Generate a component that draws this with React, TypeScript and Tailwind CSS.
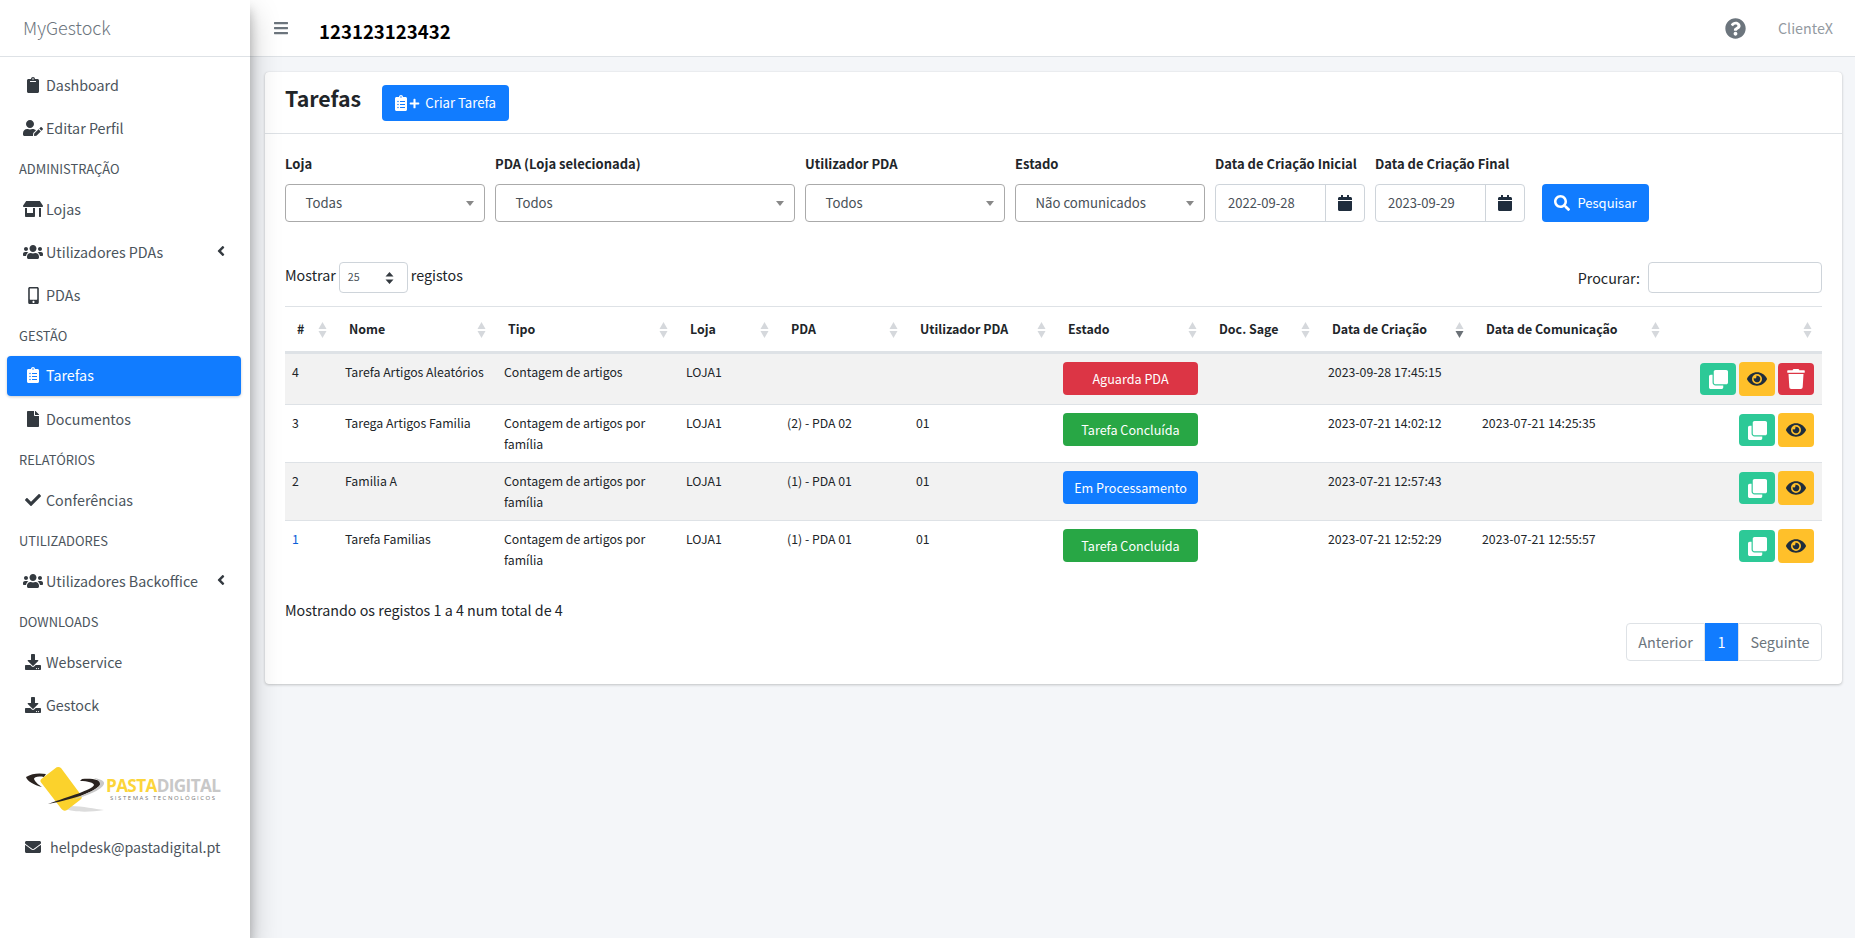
import React from "react";
import {
  FaClipboard, FaUserEdit, FaStoreAlt, FaUsers, FaMobileAlt, FaClipboardList, FaFile, FaCheck,
  FaDownload, FaEnvelope, FaBars, FaQuestionCircle, FaAngleLeft, FaCalendar, FaSearch, FaClone,
  FaEye, FaTrash, FaPlus,
} from "react-icons/fa";

function NavItem({ icon, label, active, chevron }: { icon: React.ReactNode; label: string; active?: boolean; chevron?: boolean }) {
  return (
    <div className={`relative mx-[7px] flex h-10 w-[234px] items-center rounded-[4px] pb-[2px] pl-4 ${active ? "-mt-px mb-[4px] bg-[#117cff] text-white shadow-[0_1px_3px_rgba(0,0,0,0.2)]" : "mb-[3px] text-[#4b545c]"}`}>
      <span className={`flex w-5 justify-center ${active ? "text-white" : "text-[#343a40]"}`}>{icon}</span>
      <span className="ml-[3px] text-[14.3px] leading-6">{label}</span>
      {chevron && <FaAngleLeft className="absolute right-[12px] top-[10px] text-[16px] text-[#343a40]" />}
    </div>
  );
}

function Section({ label }: { label: string }) {
  return <div className="flex h-[38px] items-center pb-[4px] pl-[19px] text-[12.9px] uppercase text-[#4b545c]">{label}</div>;
}

function Logo() {
  return (
    <div className="ml-[26px] mt-[37px] flex h-[46px] items-start">
      <svg width="78" height="46" viewBox="0 0 78 46" className="shrink-0">
        <path d="M34 41 C50 38 66 43 78 44 C60 47 44 46 34 41Z" fill="#dcdcdc" />
        <path d="M0 11 C6 7 14 7 20 8 L18 11 C12 10 8 11 8 13 C9 16 13 19 16 21 C8 19 1 15 0 11Z" fill="#2a2320" />
        <path d="M29 2.5 Q32 0 35 2 L55 29 Q57 32 54 34 L41 44 Q38 46 35.5 43 L15.5 17 Q13 14.5 16 12.5Z" fill="#fbd22c" />
        <path d="M56 13 C66 12 75 14 75 17 C74 24 50 33 22 38 C44 30 66 24 68 19 C68 17 62 15 54 15Z" fill="#2a2320" />
        <path d="M68 12 C74 13 79 15 78 18 C76 24 60 30 46 34 C60 28 74 22 74 18 C74 16 72 14 68 12Z" fill="#c9c9c9" />
      </svg>
      <div className="ml-[2px] mt-[11px] flex flex-col font-['Open_Sans',sans-serif]">
        <div className="text-[17.2px] font-bold leading-[18px] tracking-[-0.65px]">
          <span className="text-[#fcd53a]">PASTA</span><span className="text-[#c8c8c8]">DIGITAL</span>
        </div>
        <div className="ml-[4px] whitespace-nowrap text-[6px] leading-[7px] tracking-[1.55px] text-[#777]">SISTEMAS TECNOLÓGICOS</div>
      </div>
    </div>
  );
}

function Sidebar() {
  return (
    <aside className="relative z-20 flex w-[250px] shrink-0 flex-col bg-white shadow-[0_14px_28px_rgba(0,0,0,0.25),0_10px_10px_rgba(0,0,0,0.22)]">
      <div className="flex h-[57px] items-center border-b border-[#dee2e6] pb-[2px] pl-[23px] text-[18px] font-light text-[#6c757d]">MyGestock</div>
      <nav className="flex flex-col pt-[9px]">
        <NavItem icon={<FaClipboard className="text-[16px]" />} label="Dashboard" />
        <NavItem icon={<FaUserEdit className="text-[20px]" />} label="Editar Perfil" />
        <Section label="Administração" />
        <NavItem icon={<FaStoreAlt className="text-[20px]" />} label="Lojas" />
        <NavItem icon={<FaUsers className="text-[20px]" />} label="Utilizadores PDAs" chevron />
        <NavItem icon={<FaMobileAlt className="text-[17px]" />} label="PDAs" />
        <Section label="Gestão" />
        <NavItem icon={<FaClipboardList className="text-[16px]" />} label="Tarefas" active />
        <NavItem icon={<FaFile className="text-[16px]" />} label="Documentos" />
        <Section label="Relatórios" />
        <NavItem icon={<FaCheck className="text-[16px]" />} label="Conferências" />
        <Section label="Utilizadores" />
        <NavItem icon={<FaUsers className="text-[20px]" />} label="Utilizadores Backoffice" chevron />
        <Section label="Downloads" />
        <NavItem icon={<FaDownload className="text-[16px]" />} label="Webservice" />
        <NavItem icon={<FaDownload className="text-[16px]" />} label="Gestock" />
      </nav>
      <Logo />
      <div className="ml-[25px] mt-[23px] flex items-center text-[14.3px] leading-6 text-[#4b545c]">
        <FaEnvelope className="text-[16px] text-[#343a40]" />
        <span className="ml-[9px]">helpdesk@pastadigital.pt</span>
      </div>
    </aside>
  );
}

function Topbar() {
  return (
    <header className="flex h-[57px] items-center border-b border-[#dee2e6] bg-white pl-[23px] pr-[22px]">
      <FaBars className="text-[16px] text-[#6c757d]" />
      <span className="ml-[30px] mt-[5px] text-[18.6px] font-bold text-black">123123123432</span>
      <FaQuestionCircle className="ml-auto text-[21px] text-[#6c757d]" />
      <span className="ml-[32px] text-[14.3px] text-[#939aa1]">ClienteX</span>
    </header>
  );
}

function Select({ label, value, widthClass }: { label: string; value: string; widthClass: string }) {
  return (
    <div className={`flex flex-col ${widthClass}`}>
      <label className="-mt-px mb-[10px] h-[21px] text-[13px] font-bold leading-[21px] text-[#212529]">{label}</label>
      <div className="relative flex h-[38px] items-center rounded-[4px] border border-[#aaaaaa] bg-white pl-[19.5px] text-[13.2px] text-[#495057]">
        {value}
        <span className="absolute right-[10px] top-[16px] h-0 w-0 border-x-[4px] border-t-[5px] border-x-transparent border-t-[#888]" />
      </div>
    </div>
  );
}

function DateField({ label, value }: { label: string; value: string }) {
  return (
    <div className="flex w-[150px] flex-col">
      <label className="-mt-px mb-[10px] h-[21px] whitespace-nowrap text-[13px] font-bold leading-[21px] text-[#212529]">{label}</label>
      <div className="flex h-[38px] rounded-[4px] border border-[#ced4da] bg-white text-[13px] text-[#495057]">
        <span className="flex flex-1 items-center pl-3">{value}</span>
        <span className="flex w-[39px] items-center justify-center border-l border-[#ced4da] text-[#1f2d3d]"><FaCalendar className="text-[16px]" /></span>
      </div>
    </div>
  );
}

function SortIcons({ active }: { active?: boolean }) {
  return (
    <svg width="9" height="16" viewBox="0 0 9 16" className="absolute right-[10px] top-[15px]">
      <path d="M4.5 0 L8.5 7 H0.5Z" fill="#d5d8dc" />
      <path d="M4.5 16 L8.5 9 H0.5Z" fill={active ? "#6b7177" : "#d5d8dc"} />
    </svg>
  );
}

const heads = [
  { t: "#", w: "w-[52px]" },
  { t: "Nome", w: "w-[159px]" },
  { t: "Tipo", w: "w-[182px]" },
  { t: "Loja", w: "w-[101px]" },
  { t: "PDA", w: "w-[129px]" },
  { t: "Utilizador PDA", w: "w-[148px]" },
  { t: "Estado", w: "w-[151px]" },
  { t: "Doc. Sage", w: "w-[113px]" },
  { t: "Data de Criação", w: "w-[154px]", active: true },
  { t: "Data de Comunicação", w: "w-[196px]" },
  { t: "", w: "w-[152px]" },
];

const rows = [
  { id: "4", nome: "Tarefa Artigos Aleatórios", tipo: "Contagem de artigos", pda: "", user: "", estado: "Aguarda PDA", cor: "bg-[#dc3545]", criada: "2023-09-28 17:45:15", com: "", del: true, idCor: "" },
  { id: "3", nome: "Tarega Artigos Familia", tipo: "Contagem de artigos por família", pda: "(2) - PDA 02", user: "01", estado: "Tarefa Concluída", cor: "bg-[#28a745]", criada: "2023-07-21 14:02:12", com: "2023-07-21 14:25:35", del: false, idCor: "" },
  { id: "2", nome: "Familia A", tipo: "Contagem de artigos por família", pda: "(1) - PDA 01", user: "01", estado: "Em Processamento", cor: "bg-[#117cff]", criada: "2023-07-21 12:57:43", com: "", del: false, idCor: "" },
  { id: "1", nome: "Tarefa Familias", tipo: "Contagem de artigos por família", pda: "(1) - PDA 01", user: "01", estado: "Tarefa Concluída", cor: "bg-[#28a745]", criada: "2023-07-21 12:52:29", com: "2023-07-21 12:55:57", del: false, idCor: "text-[#0b5ed7]" },
];

function Table() {
  return (
    <table className="w-[1537px] table-fixed border-collapse text-[12.3px] leading-[21px] text-[#212529]">
      <colgroup>
        {heads.map((h, i) => <col key={i} className={h.w} />)}
      </colgroup>
      <thead>
        <tr className="h-[46px] border-y border-[#dee2e6] border-b-[3px]">
          {heads.map((h, i) => (
            <th key={i} className="relative pl-3 text-left align-middle text-[12.4px] font-bold">
              {h.t}
              <SortIcons active={h.active} />
            </th>
          ))}
        </tr>
      </thead>
      <tbody>
        {rows.map((r, i) => (
          <tr key={r.id} className={`border-b border-[#dee2e6] last:border-b-0 ${i === 0 ? "h-[52px]" : "h-[58px]"} ${i % 2 === 0 ? "bg-[#f2f2f2]" : "bg-white"}`}>
            <td className={`pl-[7px] pt-2 align-top ${r.idCor}`}>{r.id}</td>
            <td className="px-2 pt-2 align-top">{r.nome}</td>
            <td className="px-2 pt-2 align-top">{r.tipo}</td>
            <td className="px-2 pt-2 align-top">LOJA1</td>
            <td className="px-2 pt-2 align-top">{r.pda}</td>
            <td className="px-2 pt-2 align-top">{r.user}</td>
            <td className="pl-[7px] pt-2 align-top">
              <div className={`flex h-[33px] w-[135px] items-center justify-center rounded-[4px] text-[12.6px] text-white ${r.cor}`}>{r.estado}</div>
            </td>
            <td className="px-2 pt-2 align-top"></td>
            <td className="whitespace-nowrap px-2 pt-2 align-top">{r.criada}</td>
            <td className="whitespace-nowrap px-2 pt-2 align-top">{r.com}</td>
            <td className="pr-2 pt-2 align-top">
              <div className="flex items-center justify-end gap-[3px]">
                <span className="flex h-[32px] w-[36px] items-center justify-center rounded-[4px] bg-[#2dc997] text-[19px] text-white"><FaClone /></span>
                <span className="flex h-[34px] w-[36px] items-center justify-center rounded-[4px] bg-[#ffc02a] text-[20px] text-[#1f2d3d]"><FaEye /></span>
                {r.del && <span className="flex h-[32px] w-[36px] items-center justify-center rounded-[4px] bg-[#dc3545] text-[20px] text-white"><FaTrash /></span>}
              </div>
            </td>
          </tr>
        ))}
      </tbody>
    </table>
  );
}

export default function App() {
  return (
    <div className="flex h-[938px] w-[1855px] overflow-hidden bg-[#f4f6f9] font-['Noto_Sans_CJK_SC',sans-serif] text-[#212529]">
      <Sidebar />
      <main className="flex min-w-0 flex-1 flex-col">
        <Topbar />
        <div className="pl-[15px] pr-[13px] pt-[15px]">
          <section className="h-[612px] rounded-[4px] bg-white shadow-[0_0_1px_rgba(0,0,0,0.125),0_1px_3px_rgba(0,0,0,0.2)]">
            <div className="flex h-[62px] items-start border-b border-[#dee2e6] pl-5 pt-[13px]">
              <h1 className="-mt-px text-[21.3px] font-bold leading-[28px] text-[#212529]">Tarefas</h1>
              <button className="ml-[21px] flex h-9 w-[127px] items-center justify-center rounded-[4px] bg-[#117cff] pr-[2px] text-[13.2px] text-white">
                <FaClipboardList className="text-[16px]" />
                <FaPlus className="mr-[5px] text-[11px]" />
                Criar Tarefa
              </button>
            </div>
            <div className="px-5 pt-[20px]">
              <div className="flex items-start gap-[10px]">
                <Select label="Loja" value="Todas" widthClass="w-[200px]" />
                <Select label="PDA (Loja selecionada)" value="Todos" widthClass="w-[300px]" />
                <Select label="Utilizador PDA" value="Todos" widthClass="w-[200px]" />
                <Select label="Estado" value="Não comunicados" widthClass="w-[190px]" />
                <DateField label="Data de Criação Inicial" value="2022-09-28" />
                <DateField label="Data de Criação Final" value="2023-09-29" />
                <button className="ml-[7px] mt-[30px] flex h-[38px] w-[107px] items-center justify-center gap-[7px] rounded-[4px] bg-[#117cff] text-[13px] text-white">
                  <FaSearch className="text-[16px]" /> Pesquisar
                </button>
              </div>
              <div className="mt-[39px] flex h-[32px] items-center justify-between">
                <div className="flex items-center text-[14.3px]">
                  <span className="mb-[4px]">Mostrar</span>
                  <span className="relative ml-[3px] mr-[3px] flex h-[31px] w-[69px] items-center rounded-[4px] border border-[#ced4da] pl-[8px] text-[10.7px] text-[#495057]">
                    25
                    <svg width="9" height="12" viewBox="0 0 9 12" className="absolute right-[13px] top-[9px]"><path d="M4.5 0 L8.5 4.5 H0.5Z M4.5 12 L8.5 7.5 H0.5Z" fill="#343a40" /></svg>
                  </span>
                  <span className="mb-[4px]">registos</span>
                </div>
                <div className="flex items-center text-[14.3px]">
                  <span className="mt-[2px]">Procurar:</span>
                  <span className="ml-2 h-[31px] w-[174px] rounded-[4px] border border-[#ced4da] bg-white" />
                </div>
              </div>
              <div className="mt-[13px]"><Table /></div>
              <div className="mt-[19px] text-[14.3px] leading-6">Mostrando os registos 1 a 4 num total de 4</div>
              <div className="mt-[1px] flex justify-end">
                <div className="flex h-[38px] text-[14.4px]">
                  <span className="flex w-[79px] items-center justify-center rounded-l-[4px] border border-[#dee2e6] text-[#6c757d]">Anterior</span>
                  <span className="flex w-[33px] items-center justify-center bg-[#117cff] text-white">1</span>
                  <span className="flex w-[84px] items-center justify-center rounded-r-[4px] border border-[#dee2e6] text-[#6c757d]">Seguinte</span>
                </div>
              </div>
            </div>
          </section>
        </div>
      </main>
    </div>
  );
}
